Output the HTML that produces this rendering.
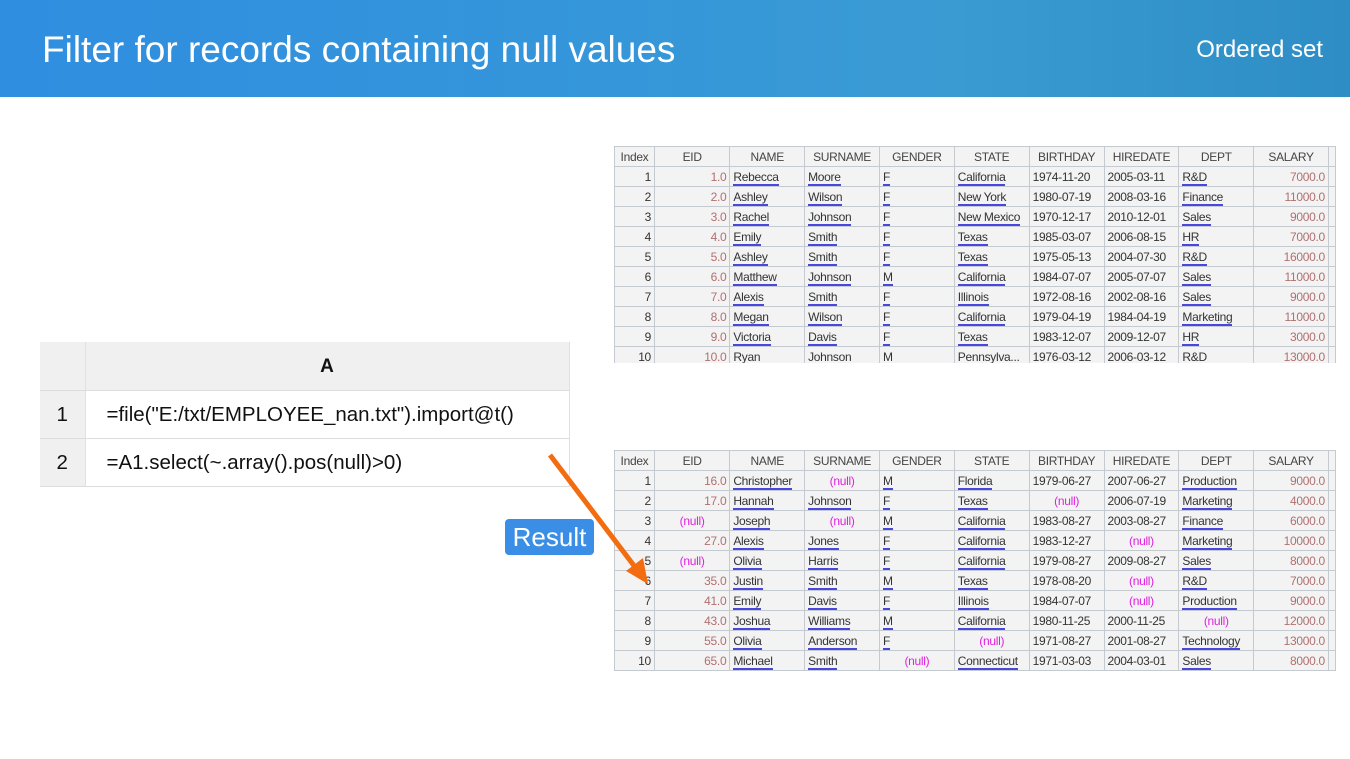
<!DOCTYPE html>
<html><head><meta charset="utf-8">
<style>
*{margin:0;padding:0;box-sizing:border-box}
body{width:1350px;height:759px;background:#fff;position:relative;overflow:hidden;font-family:"Liberation Sans",sans-serif}
.hdr{position:absolute;left:0;top:0;width:1350px;height:97px;background:linear-gradient(90deg,#2f8ee0 0%,#3596da 45%,#3a9bd3 70%,#2d8dc4 100%)}
.hdr .t{position:absolute;left:42px;top:29px;color:#fff;font-size:37px}
.hdr .s{position:absolute;right:27px;top:36px;color:#fff;font-size:24px}
.grid{position:absolute;left:40px;top:342px;border-collapse:collapse;font-size:20.5px;color:#111}
.grid td{border-bottom:1px solid #ddd;height:48px;padding-left:21px;padding-top:2px}
.grid td.i{width:45px;background:#f0f0f0;text-align:center;padding:2px 0 0 0;border-right:1px solid #e0e0e0}
.grid td.c{width:484px;border-right:1px solid #e0e0e0}
.grid tr.h td{background:#f0f0f0;font-weight:bold;text-align:center;padding:3px 0 0 0;font-size:19px}
.res{position:absolute;left:505px;top:519px;width:89px;height:36px;background:#3a8ee6;color:#fff;font-size:26px;text-align:center;line-height:36px;border-radius:4px}
.wrap{position:absolute;left:614px;overflow:hidden;width:722px}
table.d{border-collapse:collapse;table-layout:fixed;font-family:"Liberation Sans Narrow","Liberation Sans",sans-serif;font-size:12px;letter-spacing:-0.3px;color:#333;background:#f3f3f3}
table.d td{border:1px solid #c5c9d0;height:20px;padding:0 3px;white-space:nowrap;overflow:hidden}
table.d tr.h td{text-align:center;color:#444;height:20px}
table.d td.n{text-align:right}
table.d td.e{text-align:right;color:#b07070}
table.d td.z{text-align:center;color:#e020e0}
table.d span{border-bottom:2px solid #4848e0;padding-bottom:0}
svg.arr{position:absolute;left:0;top:0;z-index:5}
</style></head><body>
<div class="hdr"><div class="t">Filter for records containing null values</div><div class="s">Ordered set</div></div>

<table class="grid">
<tr class="h"><td class="i"></td><td class="c">A</td></tr>
<tr><td class="i">1</td><td class="c">=file("E:/txt/EMPLOYEE_nan.txt").import@t()</td></tr>
<tr><td class="i">2</td><td class="c">=A1.select(~.array().pos(null)&gt;0)</td></tr>
</table>

<div class="res">Result</div>

<div class="wrap" style="top:146px;height:217px">
<table class="d">
<colgroup><col style="width:40px"><col style="width:76px"><col style="width:75px"><col style="width:75px"><col style="width:75px"><col style="width:75px"><col style="width:75px"><col style="width:75px"><col style="width:75px"><col style="width:75px"><col style="width:4px"></colgroup>
<tr class="h"><td>Index</td><td>EID</td><td>NAME</td><td>SURNAME</td><td>GENDER</td><td>STATE</td><td>BIRTHDAY</td><td>HIREDATE</td><td>DEPT</td><td>SALARY</td><td></td></tr>
<tr><td class="n">1</td><td class="e">1.0</td><td><span>Rebecca</span></td><td><span>Moore</span></td><td><span>F</span></td><td><span>California</span></td><td>1974-11-20</td><td>2005-03-11</td><td><span>R&amp;D</span></td><td class="e">7000.0</td><td></td></tr>
<tr><td class="n">2</td><td class="e">2.0</td><td><span>Ashley</span></td><td><span>Wilson</span></td><td><span>F</span></td><td><span>New York</span></td><td>1980-07-19</td><td>2008-03-16</td><td><span>Finance</span></td><td class="e">11000.0</td><td></td></tr>
<tr><td class="n">3</td><td class="e">3.0</td><td><span>Rachel</span></td><td><span>Johnson</span></td><td><span>F</span></td><td><span>New Mexico</span></td><td>1970-12-17</td><td>2010-12-01</td><td><span>Sales</span></td><td class="e">9000.0</td><td></td></tr>
<tr><td class="n">4</td><td class="e">4.0</td><td><span>Emily</span></td><td><span>Smith</span></td><td><span>F</span></td><td><span>Texas</span></td><td>1985-03-07</td><td>2006-08-15</td><td><span>HR</span></td><td class="e">7000.0</td><td></td></tr>
<tr><td class="n">5</td><td class="e">5.0</td><td><span>Ashley</span></td><td><span>Smith</span></td><td><span>F</span></td><td><span>Texas</span></td><td>1975-05-13</td><td>2004-07-30</td><td><span>R&amp;D</span></td><td class="e">16000.0</td><td></td></tr>
<tr><td class="n">6</td><td class="e">6.0</td><td><span>Matthew</span></td><td><span>Johnson</span></td><td><span>M</span></td><td><span>California</span></td><td>1984-07-07</td><td>2005-07-07</td><td><span>Sales</span></td><td class="e">11000.0</td><td></td></tr>
<tr><td class="n">7</td><td class="e">7.0</td><td><span>Alexis</span></td><td><span>Smith</span></td><td><span>F</span></td><td><span>Illinois</span></td><td>1972-08-16</td><td>2002-08-16</td><td><span>Sales</span></td><td class="e">9000.0</td><td></td></tr>
<tr><td class="n">8</td><td class="e">8.0</td><td><span>Megan</span></td><td><span>Wilson</span></td><td><span>F</span></td><td><span>California</span></td><td>1979-04-19</td><td>1984-04-19</td><td><span>Marketing</span></td><td class="e">11000.0</td><td></td></tr>
<tr><td class="n">9</td><td class="e">9.0</td><td><span>Victoria</span></td><td><span>Davis</span></td><td><span>F</span></td><td><span>Texas</span></td><td>1983-12-07</td><td>2009-12-07</td><td><span>HR</span></td><td class="e">3000.0</td><td></td></tr>
<tr><td class="n">10</td><td class="e">10.0</td><td>Ryan</td><td>Johnson</td><td>M</td><td>Pennsylva...</td><td>1976-03-12</td><td>2006-03-12</td><td>R&amp;D</td><td class="e">13000.0</td><td></td></tr>
</table>
</div>

<div class="wrap" style="top:450px;height:221px">
<table class="d">
<colgroup><col style="width:40px"><col style="width:76px"><col style="width:75px"><col style="width:75px"><col style="width:75px"><col style="width:75px"><col style="width:75px"><col style="width:75px"><col style="width:75px"><col style="width:75px"><col style="width:4px"></colgroup>
<tr class="h"><td>Index</td><td>EID</td><td>NAME</td><td>SURNAME</td><td>GENDER</td><td>STATE</td><td>BIRTHDAY</td><td>HIREDATE</td><td>DEPT</td><td>SALARY</td><td></td></tr>
<tr><td class="n">1</td><td class="e">16.0</td><td><span>Christopher</span></td><td class="z">(null)</td><td><span>M</span></td><td><span>Florida</span></td><td>1979-06-27</td><td>2007-06-27</td><td><span>Production</span></td><td class="e">9000.0</td><td></td></tr>
<tr><td class="n">2</td><td class="e">17.0</td><td><span>Hannah</span></td><td><span>Johnson</span></td><td><span>F</span></td><td><span>Texas</span></td><td class="z">(null)</td><td>2006-07-19</td><td><span>Marketing</span></td><td class="e">4000.0</td><td></td></tr>
<tr><td class="n">3</td><td class="z">(null)</td><td><span>Joseph</span></td><td class="z">(null)</td><td><span>M</span></td><td><span>California</span></td><td>1983-08-27</td><td>2003-08-27</td><td><span>Finance</span></td><td class="e">6000.0</td><td></td></tr>
<tr><td class="n">4</td><td class="e">27.0</td><td><span>Alexis</span></td><td><span>Jones</span></td><td><span>F</span></td><td><span>California</span></td><td>1983-12-27</td><td class="z">(null)</td><td><span>Marketing</span></td><td class="e">10000.0</td><td></td></tr>
<tr><td class="n">5</td><td class="z">(null)</td><td><span>Olivia</span></td><td><span>Harris</span></td><td><span>F</span></td><td><span>California</span></td><td>1979-08-27</td><td>2009-08-27</td><td><span>Sales</span></td><td class="e">8000.0</td><td></td></tr>
<tr><td class="n">6</td><td class="e">35.0</td><td><span>Justin</span></td><td><span>Smith</span></td><td><span>M</span></td><td><span>Texas</span></td><td>1978-08-20</td><td class="z">(null)</td><td><span>R&amp;D</span></td><td class="e">7000.0</td><td></td></tr>
<tr><td class="n">7</td><td class="e">41.0</td><td><span>Emily</span></td><td><span>Davis</span></td><td><span>F</span></td><td><span>Illinois</span></td><td>1984-07-07</td><td class="z">(null)</td><td><span>Production</span></td><td class="e">9000.0</td><td></td></tr>
<tr><td class="n">8</td><td class="e">43.0</td><td><span>Joshua</span></td><td><span>Williams</span></td><td><span>M</span></td><td><span>California</span></td><td>1980-11-25</td><td>2000-11-25</td><td class="z">(null)</td><td class="e">12000.0</td><td></td></tr>
<tr><td class="n">9</td><td class="e">55.0</td><td><span>Olivia</span></td><td><span>Anderson</span></td><td><span>F</span></td><td class="z">(null)</td><td>1971-08-27</td><td>2001-08-27</td><td><span>Technology</span></td><td class="e">13000.0</td><td></td></tr>
<tr><td class="n">10</td><td class="e">65.0</td><td><span>Michael</span></td><td><span>Smith</span></td><td class="z">(null)</td><td><span>Connecticut</span></td><td>1971-03-03</td><td>2004-03-01</td><td><span>Sales</span></td><td class="e">8000.0</td><td></td></tr>
</table>
</div>

<svg class="arr" width="1350" height="759"><line x1="550" y1="455" x2="635" y2="567" stroke="#f36c10" stroke-width="5"/><polygon points="648,584 626,571 643,558" fill="#f36c10"/></svg>
</body></html>
